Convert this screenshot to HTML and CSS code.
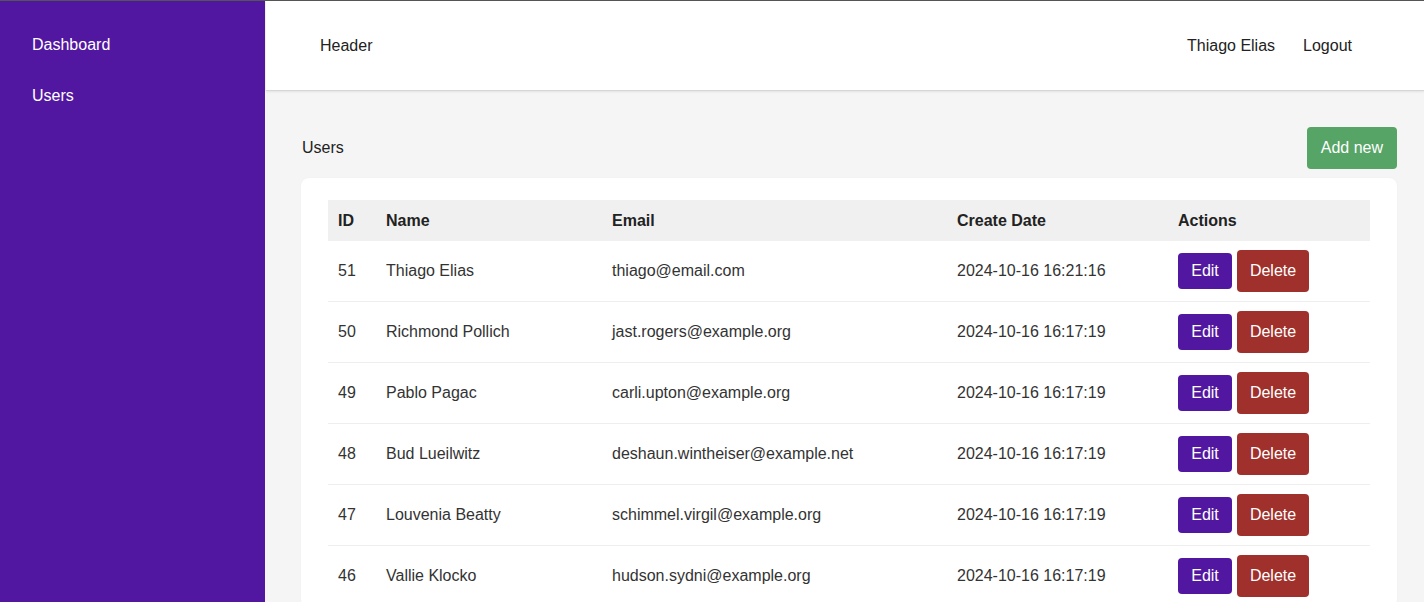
FILE: index.html
```html
<!DOCTYPE html>
<html lang="en">
<head>
<meta charset="utf-8">
<title>Users</title>
<link rel="stylesheet" href="styles.css">
</head>
<body>
<div class="app">
  <aside class="sidebar">
    <a class="nav-link" href="#">Dashboard</a>
    <a class="nav-link" href="#">Users</a>
  </aside>
  <div class="content">
    <header class="header">
      <div class="header-title">Header</div>
      <div class="header-right">
        <span>Thiago Elias</span>
        <a href="#" class="logout">Logout</a>
      </div>
    </header>
    <main class="main">
      <div class="title-row">
        <h1 class="page-title">Users</h1>
        <button class="btn btn-green">Add new</button>
      </div>
      <div class="card">
        <table class="table">
          <colgroup>
            <col class="c-id"><col class="c-name"><col class="c-email"><col class="c-date"><col class="c-actions">
          </colgroup>
          <thead>
            <tr><th>ID</th><th>Name</th><th>Email</th><th>Create Date</th><th>Actions</th></tr>
          </thead>
          <tbody>
            <tr><td>51</td><td>Thiago Elias</td><td>thiago@email.com</td><td>2024-10-16 16:21:16</td><td><button class="btn btn-edit">Edit</button><button class="btn btn-delete">Delete</button></td></tr>
            <tr><td>50</td><td>Richmond Pollich</td><td>jast.rogers@example.org</td><td>2024-10-16 16:17:19</td><td><button class="btn btn-edit">Edit</button><button class="btn btn-delete">Delete</button></td></tr>
            <tr><td>49</td><td>Pablo Pagac</td><td>carli.upton@example.org</td><td>2024-10-16 16:17:19</td><td><button class="btn btn-edit">Edit</button><button class="btn btn-delete">Delete</button></td></tr>
            <tr><td>48</td><td>Bud Lueilwitz</td><td>deshaun.wintheiser@example.net</td><td>2024-10-16 16:17:19</td><td><button class="btn btn-edit">Edit</button><button class="btn btn-delete">Delete</button></td></tr>
            <tr><td>47</td><td>Louvenia Beatty</td><td>schimmel.virgil@example.org</td><td>2024-10-16 16:17:19</td><td><button class="btn btn-edit">Edit</button><button class="btn btn-delete">Delete</button></td></tr>
            <tr><td>46</td><td>Vallie Klocko</td><td>hudson.sydni@example.org</td><td>2024-10-16 16:17:19</td><td><button class="btn btn-edit">Edit</button><button class="btn btn-delete">Delete</button></td></tr>
          </tbody>
        </table>
      </div>
    </main>
  </div>
</div>
</body>
</html>
```

FILE: styles.css
```css
* { box-sizing: border-box; }
html, body { margin: 0; padding: 0; height: 100%; overflow: hidden; }
body {
  font-family: "Liberation Sans", Arial, sans-serif;
  font-size: 16px;
  color: #222;
  border-top: 1px solid #555;
  background: #f5f5f5;
}
.app { display: flex; min-height: 100%; }
.sidebar {
  width: 265px;
  flex: none;
  background: #5217a0;
  padding: 35px 0 0 32px;
  display: flex;
  flex-direction: column;
  gap: 33px;
  min-height: 602px;
}
.nav-link { color: #fff; text-decoration: none; line-height: 18px; }
.content { flex: 1; display: flex; flex-direction: column; margin-left: 1px; }
.header {
  height: 90px;
  background: #fff;
  border-bottom: 1px solid #d6d6d6;
  box-shadow: 0 1px 2px rgba(0,0,0,0.08);
  display: flex;
  align-items: center;
  justify-content: space-between;
  padding: 0 72px 0 54px;
  color: #222;
}
.header-right { display: flex; gap: 28px; }
.logout { color: #222; text-decoration: none; }
.main { padding: 36px 27px 0 35px; }
.title-row { display: flex; justify-content: space-between; align-items: center; }
.page-title { font-size: 16px; font-weight: normal; margin: 0 0 0 1px; }
.btn {
  font-family: "Liberation Sans", Arial, sans-serif;
  font-size: 16px;
  line-height: 18px;
  color: #fff;
  border: none;
  border-radius: 4px;
  cursor: pointer;
  white-space: nowrap;
}
.btn-green { background: #56a466; padding: 12px 14px; height: 42px; }
.card {
  margin-top: 9px;
  background: #fff;
  border-radius: 8px;
  padding: 22px 27px 0 27px;
  box-shadow: 0 0 2px rgba(0,0,0,0.04);
}
.table { width: 100%; border-collapse: collapse; table-layout: fixed; }
.c-id { width: 48px; }
.c-name { width: 226px; }
.c-email { width: 345px; }
.c-date { width: 221px; }
.c-actions { width: auto; }
.table th {
  background: #f0f0f0;
  text-align: left;
  font-weight: bold;
  height: 41px;
  padding: 0 10px;
  color: #222;
}
.table td {
  padding: 9px 10px;
  height: 60.4px;
  border-bottom: 1px solid #eeeeee;
  color: #333;
  white-space: nowrap;
}
.btn-edit { background: #5217a0; padding: 9px 12px; width: 54px; height: 36px; vertical-align: middle; }
.btn-delete { background: #a0302c; padding: 12px 12px; width: 72px; height: 42px; margin-left: 5px; vertical-align: middle; }
```
